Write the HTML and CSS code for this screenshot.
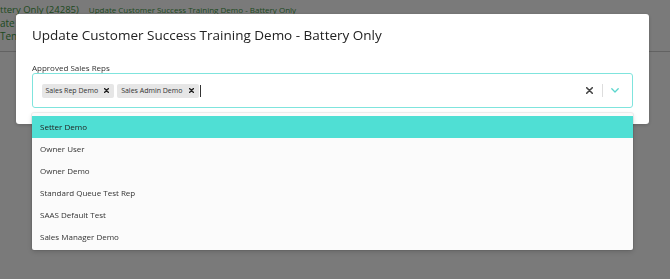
FILE: index.html
```html
<!DOCTYPE html>
<html>
<head>
<meta charset="utf-8">
<link rel="stylesheet" href="styles.css">
</head>
<body>
<div class="page">
  <div class="bg-head">
    <div class="bg-line1"><span class="bg-big">ttery Only (24285)</span><span class="bg-small">Update Customer Success Training Demo - Battery Only</span></div>
    <div class="bg-line">ate</div>
    <div class="bg-line">Ten</div>
  </div>
</div>
<div class="overlay">
  <div class="modal">
    <h2 class="title">Update Customer Success Training Demo - Battery Only</h2>
    <div class="label">Approved Sales Reps</div>
    <div class="field">
      <div class="control">
        <div class="values">
          <span class="chip"><span class="chip-text">Sales Rep Demo</span><svg class="chip-x" viewBox="0 0 5 5" width="5" height="5"><path d="M0.5 0.5L4.5 4.5M4.5 0.5L0.5 4.5" stroke="#222" stroke-width="1.4" stroke-linecap="round"/></svg></span>
          <span class="chip"><span class="chip-text">Sales Admin Demo</span><svg class="chip-x" viewBox="0 0 5 5" width="5" height="5"><path d="M0.5 0.5L4.5 4.5M4.5 0.5L0.5 4.5" stroke="#222" stroke-width="1.4" stroke-linecap="round"/></svg></span>
          <span class="caret"></span>
        </div>
        <div class="indicators">
          <svg class="clear" viewBox="0 0 7 7" width="7" height="7"><path d="M0.7 0.7L6.3 6.3M6.3 0.7L0.7 6.3" stroke="#444" stroke-width="1.6" stroke-linecap="round"/></svg>
          <span class="sep"></span>
          <svg class="chev" viewBox="0 0 8 5" width="8" height="5"><path d="M0.8 0.8L4 4L7.2 0.8" fill="none" stroke="#5ad6cd" stroke-width="1.3" stroke-linecap="round" stroke-linejoin="round"/></svg>
        </div>
      </div>
      <div class="menu">
        <div class="option active">Setter Demo</div>
        <div class="option">Owner User</div>
        <div class="option">Owner Demo</div>
        <div class="option">Standard Queue Test Rep</div>
        <div class="option">SAAS Default Test</div>
        <div class="option">Sales Manager Demo</div>
      </div>
    </div>
  </div>
</div>
</body>
</html>
```
FILE: styles.css
```css
html, body {
  margin: 0;
  padding: 0;
  background: #ffffff;
  font-family: "Open Sans", "Noto Sans", sans-serif;
  overflow: hidden;
}
.page {
  width: 670px;
  height: 279px;
}
.bg-head {
  height: 52px;
  border-bottom: 1px solid #cccccc;
  padding-top: 3px;
  box-sizing: border-box;
  color: #3f9a44;
}
.bg-line1 {
  display: flex;
  align-items: baseline;
  gap: 10px;
  height: 14px;
  line-height: 14px;
}
.bg-big {
  font-size: 9.5px;
}
.bg-small {
  font-size: 8px;
}
.bg-line {
  font-size: 10px;
  line-height: 13px;
}
.overlay {
  position: fixed;
  inset: 0;
  background: rgba(0, 0, 0, 0.52);
  padding: 14px 21px 0 16px;
}
.modal {
  background: #ffffff;
  border-radius: 3px;
  padding: 11px 16px 16px;
  box-shadow: 0 1px 4px rgba(0, 0, 0, 0.2);
}
.title {
  margin: 0 0 17px;
  font-size: 13.5px;
  line-height: 20px;
  font-weight: 400;
  color: #222222;
}
.label {
  font-size: 8px;
  line-height: 11px;
  color: #333333;
}
.field {
  position: relative;
}
.control {
  height: 35px;
  box-sizing: border-box;
  border: 1.5px solid #7fe4dd;
  border-radius: 3px;
  display: flex;
  align-items: center;
  padding-left: 8.5px;
}
.values {
  flex: 1;
  display: flex;
  align-items: center;
  gap: 3px;
}
.chip {
  display: flex;
  align-items: center;
  height: 14px;
  background: #e6e6e6;
  border-radius: 2px;
  padding: 0 5px 0 4px;
  gap: 6px;
}
.chip-text {
  font-size: 7px;
  line-height: 14px;
  color: #333333;
}
.chip-x {
  display: block;
}
.caret {
  width: 1px;
  height: 12px;
  background: #333333;
  margin-left: -2px;
}
.indicators {
  display: flex;
  align-items: center;
  padding-right: 13px;
}
.clear {
  display: block;
  margin-right: 9px;
}
.sep {
  width: 1px;
  height: 13px;
  background: #dddddd;
  margin-right: 8px;
}
.chev {
  display: block;
}
.menu {
  position: absolute;
  top: 40px;
  left: 0;
  right: 0;
  background: #fbfbfb;
  padding: 3px 0 2px;
  box-shadow: 0 0 0 1px rgba(0, 0, 0, 0.06), 0 2px 5px rgba(0, 0, 0, 0.15);
  border-radius: 2px;
}
.option {
  height: 22px;
  line-height: 22px;
  padding-left: 8px;
  font-size: 8px;
  color: #333333;
}
.option.active {
  background: #4fdfd4;
  color: #222222;
}
```
